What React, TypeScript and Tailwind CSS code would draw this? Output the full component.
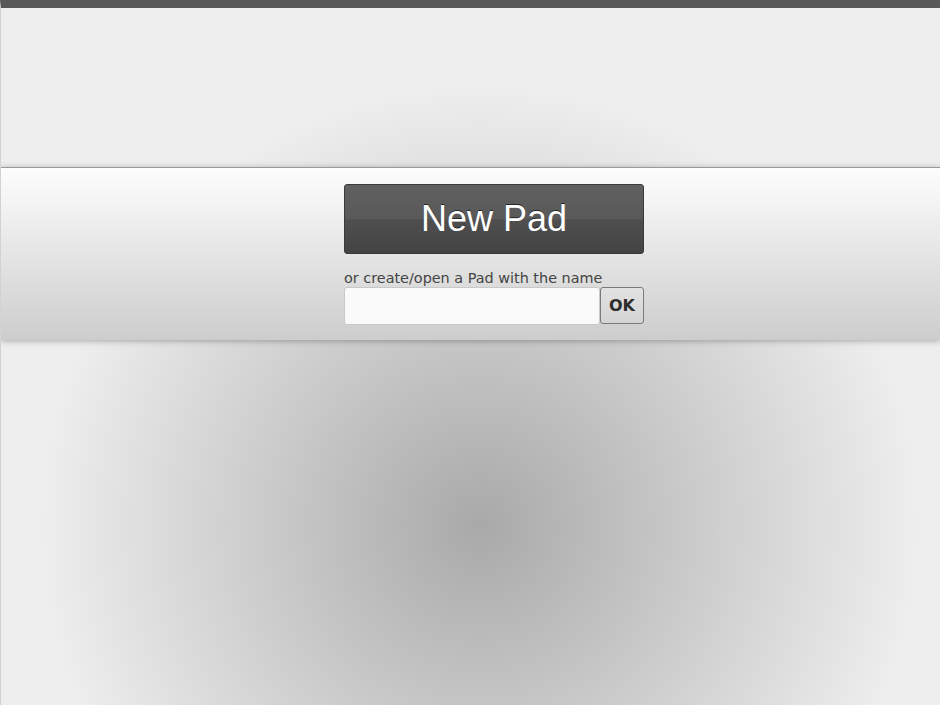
import React from "react";

export default function App() {
  return (
    <div className="h-[705px] w-[940px] overflow-hidden border-l border-l-[#d2d2d2] border-t-8 border-t-[#585858] bg-[#eeeeee] bg-[radial-gradient(circle_at_479px_517px,#a9a9a9_0px,#eeeeee_440px)]">
      <div className="mt-[159px] border-t border-t-[#9a9a9a] bg-[linear-gradient(#fdfdfd,#cdcdcd)] pt-[16px] pb-[15px] shadow-[0_1px_6px_rgba(0,0,0,0.3)]">
        <div className="ml-[343px] w-[300px]">
          <div
            className="flex h-[70px] cursor-pointer items-center justify-center rounded-[3px] border border-[#3a3a3a] bg-[linear-gradient(#606060,#595959_50%,#4f4f4f_51%,#434343)] text-[36px] leading-[70px] text-white [text-shadow:0_-1px_0_rgba(0,0,0,0.6)]"
            style={{ fontFamily: '"Liberation Sans", Arial, sans-serif' }}
          >
            New Pad
          </div>
          <div
            className="mt-[16px] h-[17px] whitespace-nowrap text-[14.4px] leading-[17px] text-[#444]"
            style={{ fontFamily: '"DejaVu Sans", sans-serif' }}
          >
            or create/open a Pad with the name
          </div>
          <div className="flex items-start">
            <input
              type="text"
              className="h-[38px] w-[256px] rounded-[3px] border border-[#c8c8c8] bg-[#fafafa] px-2 outline-none"
            />
            <button
              className="h-[37px] w-[44px] rounded-[3px] border border-[#7a7a7a] bg-[linear-gradient(#e2e2e2,#d4d4d4)] text-[16px] font-bold text-[#2e2e2e]"
              style={{ fontFamily: '"DejaVu Sans", sans-serif' }}
            >
              OK
            </button>
          </div>
        </div>
      </div>
    </div>
  );
}
